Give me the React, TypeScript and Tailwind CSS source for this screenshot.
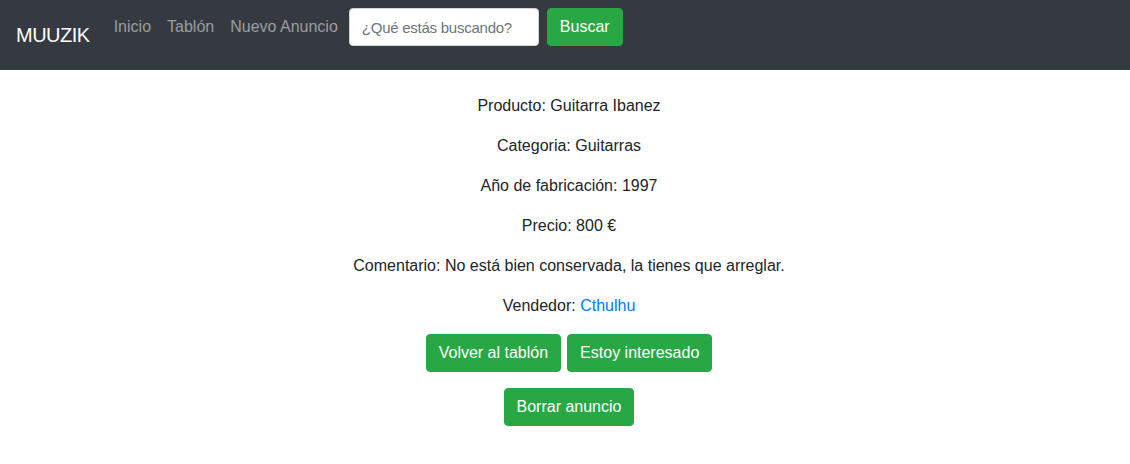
import React from 'react';

const font = { fontFamily: '"Segoe UI", "Liberation Sans", Arial, sans-serif' };

function Navbar() {
  return (
    <nav className="flex items-center bg-[#343a40] px-4 py-2">
      <a href="#" className="mr-4 py-[5px] text-[20px] leading-[30px] tracking-[-0.5px] text-white">
        MUUZIK
      </a>
      <div className="mb-4 flex items-center">
        <ul className="flex">
          {['Inicio', 'Tablón', 'Nuevo Anuncio'].map((l) => (
            <li key={l}>
              <a href="#" className="block px-2 py-[7px] text-[16px] leading-6 text-white/50 hover:text-white/75">
                {l}
              </a>
            </li>
          ))}
        </ul>
        <form className="ml-[3px] flex items-center" onSubmit={(e) => e.preventDefault()}>
          <input
            type="search"
            placeholder="¿Qué estás buscando?"
            className="h-[38px] w-[190px] rounded border border-[#ced4da] bg-white py-1.5 pl-3 pr-2 text-[15px] leading-6 tracking-[-0.25px] text-[#495057] placeholder:text-[#6c757d] outline-none"
          />
          <button type="submit" className="ml-2 h-[38px] rounded border border-[#28a745] bg-[#28a745] px-3 text-[16px] leading-6 text-white">
            Buscar
          </button>
        </form>
      </div>
    </nav>
  );
}

const rows: [string, string][] = [
  ['Producto', 'Guitarra Ibanez'],
  ['Categoria', 'Guitarras'],
  ['Año de fabricación', '1997'],
  ['Precio', '800 €'],
  ['Comentario', 'No está bien conservada, la tienes que arreglar.'],
];

function Btn({ children }: { children: React.ReactNode }) {
  return (
    <button className="rounded border border-[#28a745] bg-[#28a745] px-3 py-1.5 text-[16px] leading-6 text-white hover:bg-[#218838]">
      {children}
    </button>
  );
}

export default function App() {
  return (
    <div className="min-h-screen bg-white text-[16px] leading-6 text-[#212529]" style={font}>
      <Navbar />
      <main className="mt-6 pl-2 text-center">
        {rows.map(([k, v]) => (
          <p key={k} className="mb-4">
            {k}: {v}
          </p>
        ))}
        <p className="mb-4">
          Vendedor: <a href="#" className="text-[#007bff] hover:underline">Cthulhu</a>
        </p>
        <div className="mb-4 flex justify-center gap-1.5">
          <Btn>Volver al tablón</Btn>
          <Btn>Estoy interesado</Btn>
        </div>
        <div className="flex justify-center">
          <Btn>Borrar anuncio</Btn>
        </div>
      </main>
    </div>
  );
}
